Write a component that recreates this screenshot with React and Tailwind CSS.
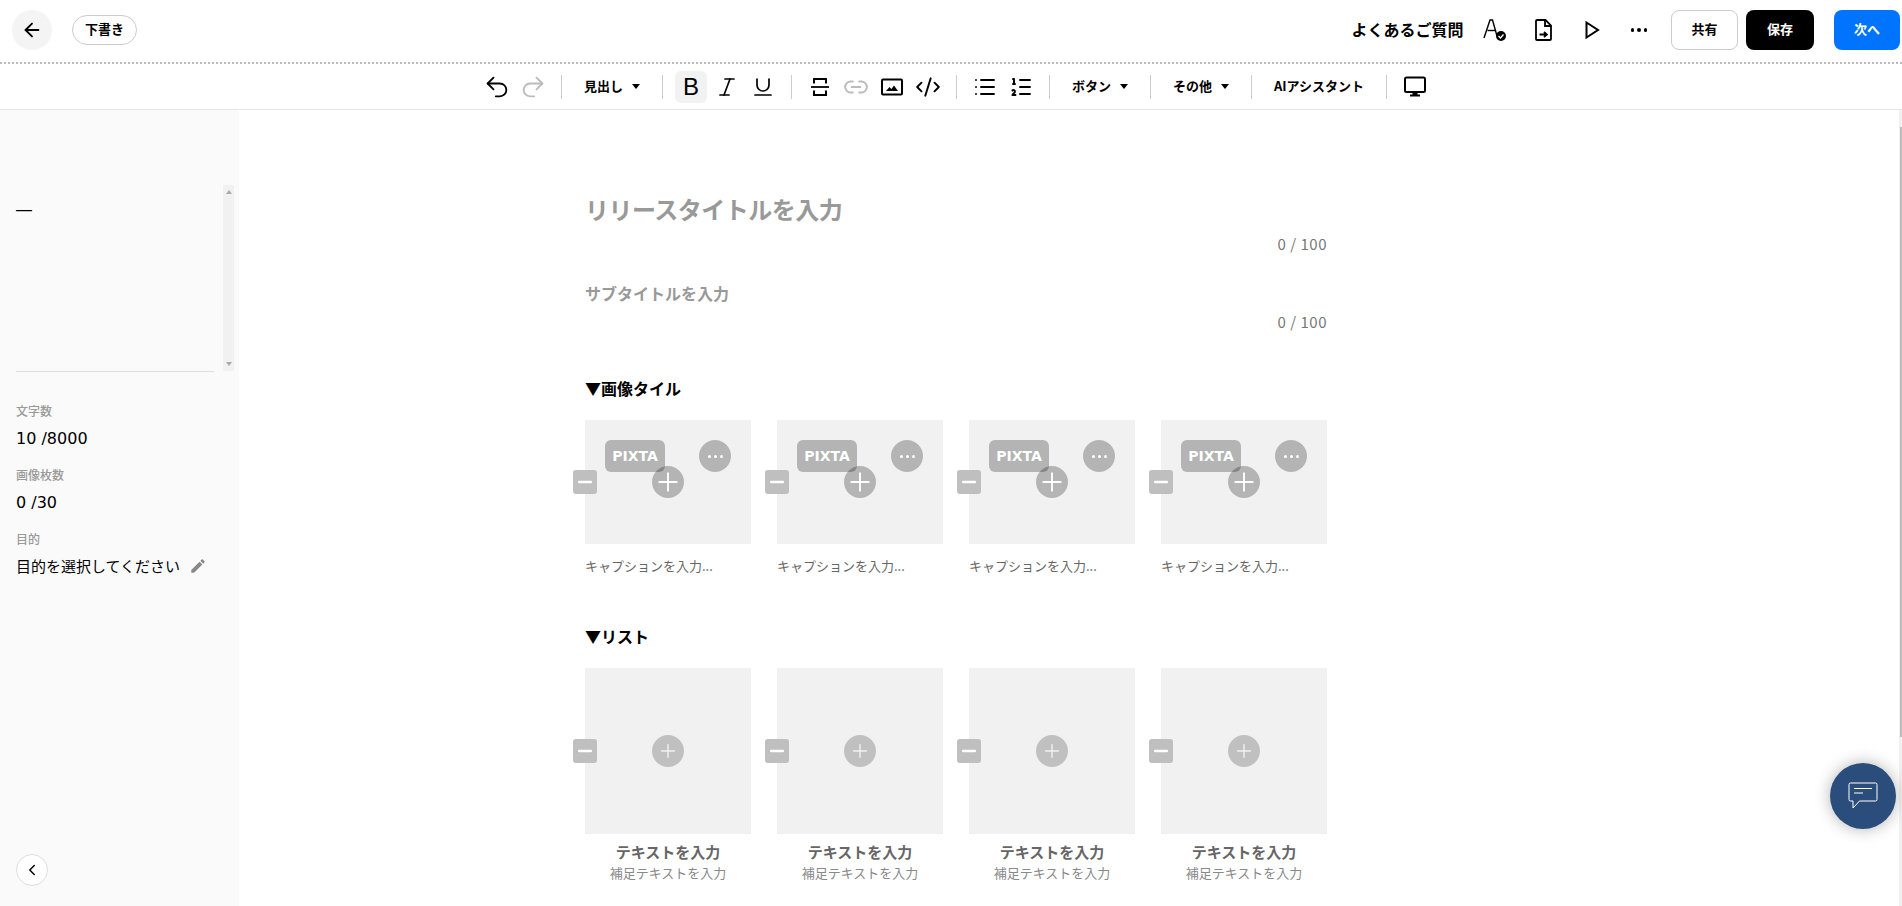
import { ArrowLeft, Undo2, Redo2, Italic, Underline, Link2, CodeXml, List, ListOrdered, ChevronLeft, Plus, Minus } from 'lucide-react'

const FONT = { fontFamily: '"Noto Sans CJK JP", sans-serif' }

function Sep() {
  return <div className="w-px h-6 bg-[#ccc] shrink-0" />
}

function ToolIcon({ children, active }) {
  return (
    <button className={`w-8 h-8 flex items-center justify-center rounded-md shrink-0 ${active ? 'bg-[#f2f2f2]' : ''}`}>
      {children}
    </button>
  )
}

function Caret() {
  return <span className="ml-[9px] w-0 h-0 border-x-[4px] border-x-transparent border-t-[5px] border-t-black" />
}

function Dropdown({ label }) {
  return (
    <button className="flex items-center px-[22px] text-[13px] font-bold text-black">
      <span className="pb-[2px]">{label}</span>
      <Caret />
    </button>
  )
}

function StrikeIcon() {
  return (
    <svg width="20" height="20" viewBox="0 0 20 20" fill="none" stroke="black" strokeWidth="2">
      <path d="M4 6.500V2h12v4.500" />
      <path d="M1 10h18" strokeWidth="1.800" />
      <path d="M4 13.500V18h12v-4.500" />
    </svg>
  )
}

function ImageIcon() {
  return (
    <svg width="22" height="18" viewBox="0 0 22 18" fill="none">
      <rect x="1" y="1.500" width="20" height="15" rx="1" stroke="black" strokeWidth="2" />
      <path d="M5 13l3.500-4 2 2 2.500-3.500 4 5.500z" fill="black" />
    </svg>
  )
}

function MonitorIcon() {
  return (
    <svg width="24" height="22" viewBox="0 0 24 22" fill="none">
      <rect x="2" y="1.500" width="20" height="14.500" rx="1.500" stroke="black" strokeWidth="2" />
      <path d="M9.500 16.500h5v2h2.500v2H7v-2h2.500z" fill="black" />
    </svg>
  )
}

function FontCheckIcon() {
  return (
    <svg width="24" height="24" viewBox="0 0 24 24" fill="none">
      <path d="M1 20L7 2h2.500L14 18" stroke="black" strokeWidth="1.400" />
      <path d="M4.500 12.500h8" stroke="black" strokeWidth="1.400" />
      <circle cx="18" cy="18" r="5" fill="black" />
      <path d="M15.500 18l2 2 3-3.500" stroke="white" strokeWidth="1.300" />
    </svg>
  )
}

function DocIcon() {
  return (
    <svg width="17" height="22" viewBox="0 0 17 22" fill="none" stroke="black" strokeWidth="1.800">
      <path d="M2 1h8.500L16 6.500v13.500a1 1 0 0 1-1 1H2a1 1 0 0 1-1-1V2a1 1 0 0 1 1-1z" />
      <path d="M10 1v6h6" />
      <path d="M4.500 15.500h7M9 13l2.800 2.500L9 18" />
    </svg>
  )
}

function PlayIcon() {
  return (
    <svg width="15" height="20" viewBox="0 0 15 20" fill="none" stroke="black" strokeWidth="2">
      <path d="M1.500 2.500L13 10 1.500 17.500z" />
    </svg>
  )
}

function PencilIcon() {
  return (
    <svg width="18" height="18" viewBox="0 0 24 24" fill="#888">
      <path d="M3 17.250V21h3.750L17.810 9.940l-3.750-3.750L3 17.250zM20.710 7.040c.39-.39.39-1.020 0-1.410l-2.340-2.340c-.39-.39-1.020-.39-1.410 0l-1.830 1.830 3.750 3.750 1.830-1.830z" />
    </svg>
  )
}

function ChatIcon() {
  return (
    <svg width="30" height="28" viewBox="0 0 30 28" fill="none" stroke="white" strokeWidth="1">
      <path d="M2.500 1h25a1.500 1.500 0 0 1 1.500 1.500v15a1.500 1.500 0 0 1-1.500 1.500H11.500L5 26v-7H2.500A1.500 1.500 0 0 1 1 17.500v-15A1.500 1.500 0 0 1 2.500 1z" />
      <path d="M6 6.500h18M6 11h9" />
    </svg>
  )
}

function Header() {
  return (
    <header className="h-[64px] shrink-0 flex items-center border-b-2 border-dotted border-[#bbb] pl-3 pb-[2px] pr-[2px]">
      <button className="w-10 h-10 rounded-full bg-[#f4f4f4] flex items-center justify-center">
        <ArrowLeft size={22} strokeWidth={2} color="black" />
      </button>
      <span className="ml-5 h-[30px] w-[65px] flex items-center justify-center rounded-full border border-[#ccc] text-[13px] font-bold text-black">
        <span className="pb-[2px]">下書き</span>
      </span>
      <div className="ml-auto flex items-center">
        <span className="text-[16px] font-bold text-black mr-[19px] pb-[2px]">よくあるご質問</span>
        <FontCheckIcon />
        <span className="ml-[28px]"><DocIcon /></span>
        <span className="ml-[33px]"><PlayIcon /></span>
        <div className="ml-[31px] flex gap-[3px]">
          <span className="w-[3.500px] h-[3.500px] rounded-full bg-black" />
          <span className="w-[3.500px] h-[3.500px] rounded-full bg-black" />
          <span className="w-[3.500px] h-[3.500px] rounded-full bg-black" />
        </div>
        <button className="ml-[24px] w-[67px] h-10 rounded-lg border border-[#ccc] bg-white text-[13px] font-bold text-black pb-[2px]">共有</button>
        <button className="ml-2 w-[68px] h-10 rounded-lg bg-black text-[13px] font-bold text-white pb-[2px]">保存</button>
        <button className="ml-5 w-[66px] h-10 rounded-lg bg-[#0073ff] text-[13px] font-bold text-white pb-[2px]">次へ</button>
      </div>
    </header>
  )
}

function Toolbar() {
  return (
    <div className="h-[46px] shrink-0 flex items-center justify-center border-b border-[#e4e4e4] pl-[24px]">
      <Undo2 size={28} strokeWidth={1.600} color="black" />
      <Redo2 className="ml-2 mr-[14px]" size={28} strokeWidth={1.600} color="#bbb" />
      <Sep />
      <Dropdown label="見出し" />
      <Sep />
      <div className="flex items-center gap-1 px-3">
        <ToolIcon active>
          <span className="text-[24px] leading-none text-black font-['Liberation_Sans']">B</span>
        </ToolIcon>
        <ToolIcon><Italic size={24} strokeWidth={1.700} color="black" /></ToolIcon>
        <ToolIcon><Underline size={24} strokeWidth={1.700} color="black" /></ToolIcon>
      </div>
      <Sep />
      <div className="flex items-center gap-1 px-3">
        <ToolIcon><StrikeIcon /></ToolIcon>
        <ToolIcon><Link2 size={26} strokeWidth={1.800} color="#bbb" /></ToolIcon>
        <ToolIcon><ImageIcon /></ToolIcon>
        <ToolIcon><CodeXml size={26} strokeWidth={1.800} color="black" /></ToolIcon>
      </div>
      <Sep />
      <div className="flex items-center gap-1 px-3">
        <ToolIcon><List size={24} strokeWidth={1.900} color="black" /></ToolIcon>
        <ToolIcon><ListOrdered size={24} strokeWidth={1.900} color="black" /></ToolIcon>
      </div>
      <Sep />
      <Dropdown label="ボタン" />
      <Sep />
      <Dropdown label="その他" />
      <Sep />
      <span className="px-[22px] text-[13px] font-bold text-black pb-[2px]">AIアシスタント</span>
      <Sep />
      <div className="px-3"><ToolIcon><MonitorIcon /></ToolIcon></div>
    </div>
  )
}

function Sidebar() {
  return (
    <aside className="relative w-[239px] shrink-0 bg-[#fafafa] pt-[75px]">
      <div className="flex h-[187px] pl-4 pr-[5px] gap-[9px]">
        <div className="flex-1 border-b border-[#ddd] text-[16px] leading-[50px] text-black font-['Liberation_Sans']">—</div>
        <div className="w-[11px] h-[186px] bg-[#f1f1f1] flex flex-col items-center justify-between py-[5px]">
          <span className="w-0 h-0 border-x-[3px] border-x-transparent border-b-[4px] border-b-[#aaa]" />
          <span className="w-0 h-0 border-x-[3px] border-x-transparent border-t-[4px] border-t-[#aaa]" />
        </div>
      </div>
      <div className="pl-4 mt-[30px]">
        <p className="text-[12px] leading-[18px] font-medium text-[#999]">文字数</p>
        <p className="mt-[7px] text-[16px] leading-[24px] text-black font-['DejaVu_Sans']">10 /8000</p>
        <p className="mt-[15px] text-[12px] leading-[18px] font-medium text-[#999]">画像枚数</p>
        <p className="mt-[7px] text-[16px] leading-[24px] text-black font-['DejaVu_Sans']">0 /30</p>
        <p className="mt-[15px] text-[12px] leading-[18px] font-medium text-[#999]">目的</p>
        <div className="mt-[6px] flex items-center text-[15px] leading-[24px] text-black">
          目的を選択してください
          <span className="ml-[9px]"><PencilIcon /></span>
        </div>
      </div>
      <button className="absolute left-4 top-[744px] w-8 h-8 rounded-full bg-white border border-[#ddd] flex items-center justify-center">
        <ChevronLeft size={18} strokeWidth={2} color="black" />
      </button>
    </aside>
  )
}

function Tile({ pixta }) {
  return (
    <div className={`relative bg-[#f1f1f1] ${pixta ? 'h-[124px]' : 'h-[166px]'}`}>
      {pixta && (
        <>
          <span className="absolute left-5 top-5 w-[60px] h-8 rounded-md bg-black/25 flex items-center justify-center text-white text-[14px] font-bold font-['DejaVu_Sans']">PIXTA</span>
          <span className="absolute right-5 top-5 w-8 h-8 rounded-full bg-black/25 flex items-center justify-center gap-[3px]">
            <i className="w-[3px] h-[3px] rounded-full bg-white" />
            <i className="w-[3px] h-[3px] rounded-full bg-white" />
            <i className="w-[3px] h-[3px] rounded-full bg-white" />
          </span>
        </>
      )}
      <span className={`absolute left-1/2 top-1/2 -translate-x-1/2 -translate-y-1/2 w-8 h-8 rounded-full flex items-center justify-center ${pixta ? 'bg-black/25' : 'bg-black/20'}`}>
        <Plus size={pixta ? 30 : 22} strokeWidth={1.500} color="white" className={pixta ? '' : 'opacity-80'} />
      </span>
      <span className="absolute -left-3 top-1/2 -translate-y-1/2 w-6 h-6 rounded-[3px] bg-[#bfbfbf] flex items-center justify-center">
        <Minus size={20} strokeWidth={3} color="white" />
      </span>
    </div>
  )
}

function Main() {
  return (
    <main className="flex-1 min-w-0 overflow-hidden pl-[346px]">
      <div className="w-[742px]">
        <div className="mt-[79px] text-[24px] leading-[40px] font-bold tracking-[-0.5px] text-[#999]">リリースタイトルを入力</div>
        <div className="mt-[5px] text-right text-[15px] leading-[20px] tracking-[0.5px] text-[#777]">0 / 100</div>
        <div className="mt-[27px] text-[16px] leading-[24px] font-bold text-[#999]">サブタイトルを入力</div>
        <div className="mt-[7px] text-right text-[15px] leading-[20px] tracking-[0.5px] text-[#777]">0 / 100</div>
        <h2 className="mt-[44px] text-[16px] leading-[24px] font-bold text-black">▼画像タイル</h2>
        <div className="mt-[20px] grid grid-cols-4 gap-[26px]">
          {[0, 1, 2, 3].map((i) => (
            <div key={i}>
              <Tile pixta />
              <p className="mt-[12px] text-[13px] leading-[20px] text-[#666]">キャプションを入力...</p>
            </div>
          ))}
        </div>
        <h2 className="mt-[48px] text-[16px] leading-[24px] font-bold text-black">▼リスト</h2>
        <div className="mt-[20px] grid grid-cols-4 gap-[26px]">
          {[0, 1, 2, 3].map((i) => (
            <div key={i} className="text-center">
              <Tile />
              <p className="mt-[8px] text-[15px] leading-[20px] font-bold text-[#666]">テキストを入力</p>
              <p className="mt-[1px] text-[13px] leading-[20px] text-[#888]">補足テキストを入力</p>
            </div>
          ))}
        </div>
      </div>
    </main>
  )
}

export default function App() {
  return (
    <div className="relative h-[906px] overflow-hidden flex flex-col bg-white" style={FONT}>
      <Header />
      <Toolbar />
      <div className="flex-1 min-h-0 flex">
        <Sidebar />
        <Main />
        <div className="w-[3px] shrink-0 bg-[#f1f1f1] flex justify-end pt-[17px]">
          <div className="w-[2px] h-[610px] bg-[#bbb]" />
        </div>
      </div>
      <button className="absolute left-[1830px] top-[763px] w-[66px] h-[66px] rounded-full bg-[#2a4d7c] shadow-[0_0_16px_rgba(0,0,0,0.3)] flex items-center justify-center">
        <ChatIcon />
      </button>
    </div>
  )
}
